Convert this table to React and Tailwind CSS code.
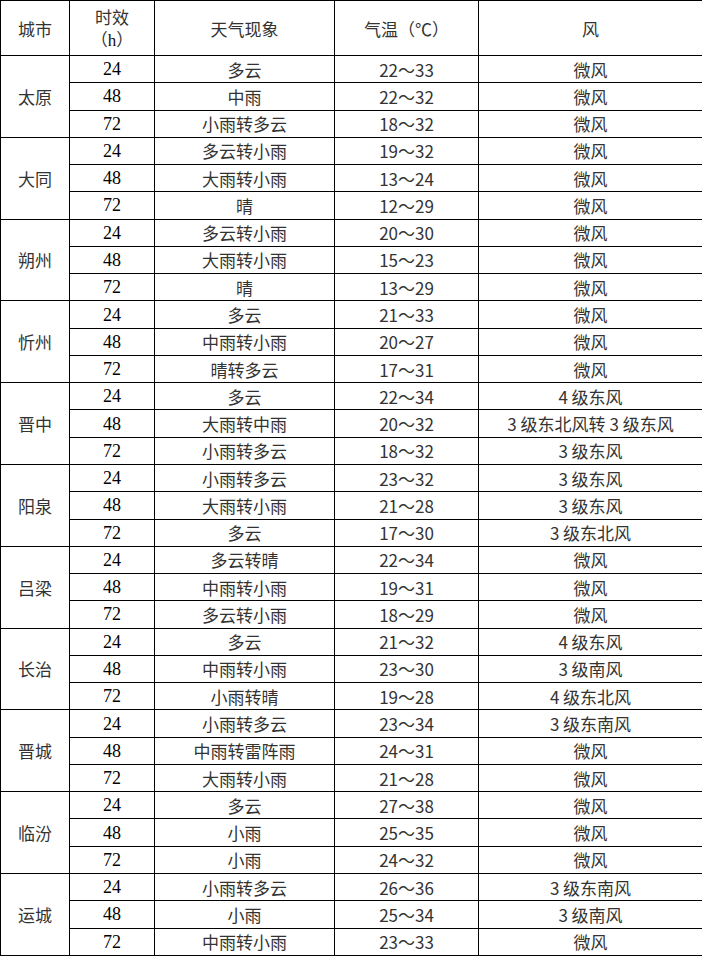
import React from 'react'

const cities = [
  ['太原', [['24', '多云', '22～33', '微风'], ['48', '中雨', '22～32', '微风'], ['72', '小雨转多云', '18～32', '微风']]],
  ['大同', [['24', '多云转小雨', '19～32', '微风'], ['48', '大雨转小雨', '13～24', '微风'], ['72', '晴', '12～29', '微风']]],
  ['朔州', [['24', '多云转小雨', '20～30', '微风'], ['48', '大雨转小雨', '15～23', '微风'], ['72', '晴', '13～29', '微风']]],
  ['忻州', [['24', '多云', '21～33', '微风'], ['48', '中雨转小雨', '20～27', '微风'], ['72', '晴转多云', '17～31', '微风']]],
  ['晋中', [['24', '多云', '22～34', '4 级东风'], ['48', '大雨转中雨', '20～32', '3 级东北风转 3 级东风'], ['72', '小雨转多云', '18～32', '3 级东风']]],
  ['阳泉', [['24', '小雨转多云', '23～32', '3 级东风'], ['48', '大雨转小雨', '21～28', '3 级东风'], ['72', '多云', '17～30', '3 级东北风']]],
  ['吕梁', [['24', '多云转晴', '22～34', '微风'], ['48', '中雨转小雨', '19～31', '微风'], ['72', '多云转小雨', '18～29', '微风']]],
  ['长治', [['24', '多云', '21～32', '4 级东风'], ['48', '中雨转小雨', '23～30', '3 级南风'], ['72', '小雨转晴', '19～28', '4 级东北风']]],
  ['晋城', [['24', '小雨转多云', '23～34', '3 级东南风'], ['48', '中雨转雷阵雨', '24～31', '微风'], ['72', '大雨转小雨', '21～28', '微风']]],
  ['临汾', [['24', '多云', '27～38', '微风'], ['48', '小雨', '25～35', '微风'], ['72', '小雨', '24～32', '微风']]],
  ['运城', [['24', '小雨转多云', '26～36', '3 级东南风'], ['48', '小雨', '25～34', '3 级南风'], ['72', '中雨转小雨', '23～33', '微风']]],
]

const cjk = { fontFamily: '"Noto Sans CJK SC", sans-serif' }

export default function App() {
  return (
    <div className="w-[702px] h-[956px] bg-white text-[#333]" style={cjk}>
      <table className="w-[702px] border-collapse table-fixed text-[17px] leading-none">
        <colgroup>
          <col className="w-[69px]" />
          <col className="w-[85px]" />
          <col className="w-[180px]" />
          <col className="w-[144px]" />
          <col className="w-[224px]" />
        </colgroup>
        <thead>
          <tr className="h-[55px]">
            <th className="border border-black font-normal text-center">城市</th>
            <th className="border border-black font-normal text-center">
              <div>时效</div>
              <div className="mt-[5px]">（<span className="font-['Liberation_Serif',serif] text-[#111]">h</span>）</div>
            </th>
            <th className="border border-black font-normal text-center">天气现象</th>
            <th className="border border-black font-normal text-center">气温（℃）</th>
            <th className="border border-black font-normal text-center">风</th>
          </tr>
        </thead>
        <tbody>
          {cities.map(([name, rows]) =>
            rows.map((r, i) => (
              <tr key={name + r[0]} className="h-[27.27px]">
                {i === 0 && (
                  <td rowSpan={3} className="border border-black text-center">{name}</td>
                )}
                <td className="border border-black text-center font-['Liberation_Serif',serif] text-[18px] text-black">{r[0]}</td>
                <td className="border border-black text-center">{r[1]}</td>
                <td className="border border-black text-center">{r[2]}</td>
                <td className="border border-black text-center">{r[3]}</td>
              </tr>
            ))
          )}
        </tbody>
      </table>
    </div>
  )
}
